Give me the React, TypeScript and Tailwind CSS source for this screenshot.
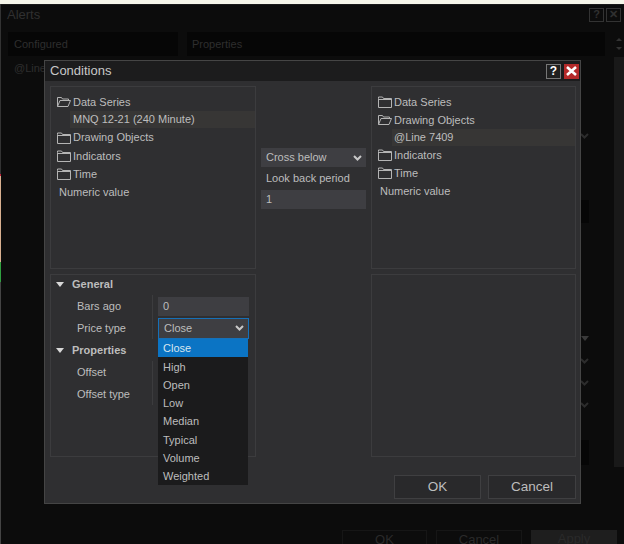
import React from "react";

const font = "font-['Liberation_Sans',Arial,sans-serif]";

// Folder outline, open variant has the slanted front flap
const Folder = ({ open }: { open?: boolean }) => (
  <svg width="14" height="12" viewBox="0 0 14 12" fill="none" stroke="#b4b4b4" strokeWidth="1" className="shrink-0">
    {open ? (
      <path d="M.5 10.5V1.5h4l1 1.5h6v1.5M.5 10.5h10.5l2.5-6H3L.5 10.5z" />
    ) : (
      <path d="M.5 2.5V1h4l1 1.5h8v9H.5v-9zM.5 3.5h13" />
    )}
  </svg>
);

const Chevron = ({ color = "#c8c8c8" }: { color?: string }) => (
  <svg width="9" height="6" viewBox="0 0 9 6" fill="none" stroke={color} strokeWidth="2" className="shrink-0">
    <path d="M1 1l3.5 3.5L8 1" />
  </svg>
);

const Caret = ({ color = "#d8d8d8" }: { color?: string }) => (
  <svg width="8" height="5" viewBox="0 0 8 5" fill={color} className="shrink-0">
    <path d="M0 0h8L4 5z" />
  </svg>
);

const TreeFolder = ({ label, open, className = "h-[18px]" }: { label: string; open?: boolean; className?: string }) => (
  <div className={`flex items-center gap-[2px] pl-[6px] ${className}`}>
    <Folder open={open} />
    <span>{label}</span>
  </div>
);

const options = ["High", "Open", "Low", "Median", "Typical", "Volume", "Weighted"];

const Tree = ({ left }: { left: boolean }) => (
  <div className="h-[183px] border border-[#3c3c3e] pt-[6px] text-[11px] text-[#bdbdbd]">
    <TreeFolder label="Data Series" open={left} />
    {left && (
      <div className="ml-[19px] flex h-[17px] items-center bg-[#373635] pl-[3px]">MNQ 12-21 (240 Minute)</div>
    )}
    <TreeFolder label="Drawing Objects" open={!left} className={left ? "h-[19px]" : "h-[18px]"} />
    {!left && (
      <div className="ml-[20px] flex h-[17px] items-center bg-[#373635] pl-[2px]">@Line 7409</div>
    )}
    <TreeFolder label="Indicators" />
    <TreeFolder label="Time" />
    <div className="flex h-[18px] items-center pl-[8px]">Numeric value</div>
  </div>
);

const PropRow = ({ label, children }: { label: string; children?: React.ReactNode }) => (
  <div className="flex h-[22px] items-center">
    <span className="w-[101px] pl-[26px]">{label}</span>
    <div className="h-full w-[1px] bg-[#3c3c3e]" />
    {children}
  </div>
);

const App = () => {
  return (
    <div className={`${font} relative h-[544px] w-[624px] overflow-hidden bg-[#0c0c0c]`}>
      {/* desktop edge behind the window */}
      <div className="h-[4px] bg-[#f6f6ea]" />
      <div className="flex h-[540px]">
        <div className="flex w-[1px] flex-col">
          <div className="h-[170px] bg-[#333333]" />
          <div className="h-[2px] bg-[#c0203a]" />
          <div className="h-[86px] bg-[#d8b090]" />
          <div className="h-[20px] bg-[#30a040]" />
          <div className="flex-1 bg-[#444444]" />
        </div>
        {/* Alerts window, dimmed */}
        <div className="flex flex-1 flex-col border-t border-[#1a1a1a]">
          <div className="flex h-[19px] items-center justify-between pl-[6px] pr-[3px] text-[13px] text-[#303030]">
            <span>Alerts</span>
            <div className="flex gap-[2px]">
              <div className="flex h-[14px] w-[15px] items-center justify-center border border-[#333333] text-[11px] font-bold">?</div>
              <div className="flex h-[14px] w-[15px] items-center justify-center border border-[#333333] text-[11px] font-bold">✕</div>
            </div>
          </div>
          <div className="flex gap-[9px] pl-[7px] pt-[8px] text-[11px] text-[#2e2e2e]">
            <div className="w-[170px]">
              <div className="flex h-[24px] items-center bg-[#060606] pl-[6px]">Configured</div>
              <div className="pl-[6px] pt-[4px]">@Line 7409</div>
            </div>
            <div className="flex w-[418px] flex-col">
              <div className="flex h-[24px] items-center bg-[#060606] pl-[5px]">Properties</div>
              <div className="flex flex-col items-end pr-[16px]">
                <div className="mt-[77px] flex"><Chevron color="#2c2c2c" /></div>
                <div className="mt-[61px] h-[23px] w-[8px] bg-[#060606]" />
                <div className="mt-[113px] flex"><Caret color="#3a3a3a" /></div>
                <div className="mt-[17px] flex"><Chevron color="#2c2c2c" /></div>
                <div className="mt-[16px] flex"><Chevron color="#2c2c2c" /></div>
                <div className="mt-[16px] flex"><Chevron color="#2c2c2c" /></div>
                <div className="mt-[32px] h-[25px] w-[8px] bg-[#060606]" />
              </div>
            </div>
            <div className="flex w-[10px] flex-col items-center text-[#2e2e2e]">
              <div className="flex h-[24px] flex-col items-center justify-center gap-[6px]">
                <div className="h-0 w-0 border-x-[3px] border-b-[3px] border-x-transparent border-b-[#333333]" />
                <div className="h-0 w-0 border-x-[3px] border-t-[3px] border-x-transparent border-t-[#333333]" />
              </div>
              <div className="mt-[1px] h-[410px] w-[11px] bg-[#191919]" />
            </div>
          </div>
          <div className="mt-auto flex justify-end gap-[9px] pr-[7px] text-[13px] leading-[18px] text-[#2a2a2a]">
            <div className="h-[14px] w-[85px] border-x border-t border-[#161616] text-center">OK</div>
            <div className="h-[14px] w-[86px] border-x border-t border-[#161616] text-center">Cancel</div>
            <div className="h-[14px] w-[86px] bg-[#1e1e1e] text-center">Apply</div>
          </div>
        </div>
      </div>

      {/* Conditions dialog */}
      <div className="absolute left-[44px] top-[60px] flex h-[444px] w-[537px] flex-col border border-[#454545] bg-[#2f2f31] text-[#bdbdbd]">
        <div className="flex h-[20px] shrink-0 items-center justify-between bg-[#1c1c1d] pl-[5px] pr-[1px] text-[13px] text-[#c8c8c8]">
          <span>Conditions</span>
          <div className="flex gap-[3px]">
            <div className="flex h-[15px] w-[15px] items-center justify-center border border-[#777777] bg-[#202020] text-[12px] font-bold leading-none text-white">?</div>
            <div className="flex h-[15px] w-[15px] items-center justify-center bg-[#b52a2a]">
              <svg width="11" height="10" viewBox="0 0 11 10" stroke="#ffffff" strokeWidth="2.6">
                <path d="M1 1l9 8M10 1l-9 8" />
              </svg>
            </div>
          </div>
        </div>
        <div className="mt-[5px] grid grid-cols-[206px_105px_205px] gap-x-[5px] px-[5px]">
          <div className="flex flex-col gap-[5px]">
            <Tree left />
            <div className="relative h-[183px] border border-[#3c3c3e] text-[11px]">
              <div className="flex h-[19px] items-center gap-[8px] pl-[5px] font-bold">
                <Caret />
                <span>General</span>
              </div>
              <div className="mt-[1px]">
                <PropRow label="Bars ago">
                  <div className="ml-[5px] flex h-[19px] w-[91px] items-center bg-[#3e3e42] pl-[5px] text-[11px]">0</div>
                </PropRow>
                <PropRow label="Price type">
                  <div className="ml-[5px] flex h-[21px] w-[91px] items-center justify-between border border-[#1670b8] bg-[#3e3e42] pl-[5px] pr-[4px] text-[11px]">
                    Close
                    <Chevron />
                  </div>
                </PropRow>
                <div className="flex h-[22px] items-center gap-[8px] pl-[5px] font-bold">
                  <Caret />
                  <span>Properties</span>
                </div>
                <PropRow label="Offset" />
                <PropRow label="Offset type" />
              </div>
              {/* open price type list */}
              <div className="absolute left-[107px] top-[64px] w-[90px] bg-[#1b1b1c] text-[11px]">
                <div className="flex h-[18px] items-center bg-[#0b74c4] pl-[5px] text-[#d8e6f0]">Close</div>
                <div className="pt-[1px]">
                  {options.map((o) => (
                    <div key={o} className="flex h-[18.2px] items-center pl-[5px]">{o}</div>
                  ))}
                </div>
              </div>
            </div>
          </div>
          <div className="flex flex-col pt-[62px] text-[11px]">
            <div className="flex h-[19px] items-center justify-between bg-[#3e3e42] pl-[5px] pr-[4px]">
              Cross below
              <Chevron />
            </div>
            <div className="flex h-[23px] items-center pl-[5px]">Look back period</div>
            <div className="flex h-[19px] items-center bg-[#3e3e42] pl-[5px]">1</div>
          </div>
          <div className="flex flex-col gap-[5px]">
            <Tree left={false} />
            <div className="h-[183px] border border-[#3c3c3e]" />
          </div>
        </div>
        <div className="mt-[18px] flex justify-end gap-[7px] pr-[4px] text-[13.5px]">
          <div className="flex h-[24px] w-[87px] items-center justify-center border border-[#3f3f41] bg-[#29292b]">OK</div>
          <div className="flex h-[24px] w-[88px] items-center justify-center border border-[#3f3f41] bg-[#29292b]">Cancel</div>
        </div>
      </div>
    </div>
  );
};

export default App;
